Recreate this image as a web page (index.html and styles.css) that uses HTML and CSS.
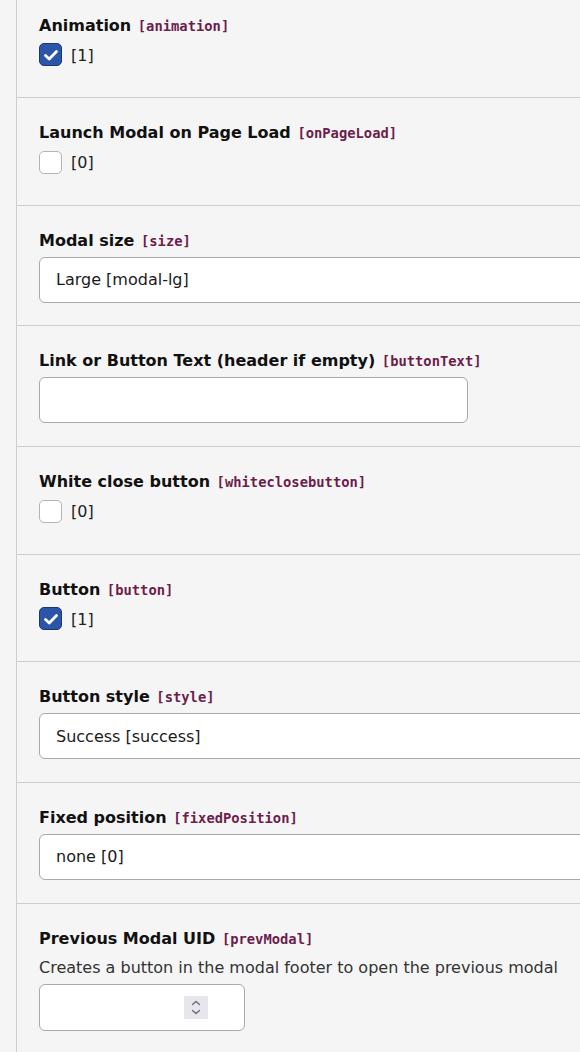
FILE: index.html
```html
<!DOCTYPE html>
<html>
<head>
<meta charset="utf-8">
<link rel="stylesheet" href="styles.css">
</head>
<body>
<div class="panel">
  <div class="field field-first">
    <div class="label">Animation <code class="key">[animation]</code></div>
    <div class="check-row">
      <span class="checkbox checked"><svg viewBox="0 0 22 22" width="22" height="22"><path d="M5.5 11.5 L9.2 15 L16.5 7.5" fill="none" stroke="#fff" stroke-width="2.8" stroke-linecap="round" stroke-linejoin="round"/></svg></span>
      <span class="check-text">[1]</span>
    </div>
  </div>
  <div class="field">
    <div class="label">Launch Modal on Page Load <code class="key">[onPageLoad]</code></div>
    <div class="check-row">
      <span class="checkbox"></span>
      <span class="check-text">[0]</span>
    </div>
  </div>
  <div class="field field-input">
    <div class="label">Modal size <code class="key">[size]</code></div>
    <div class="select">Large [modal-lg]</div>
  </div>
  <div class="field field-input">
    <div class="label">Link or Button Text (header if empty) <code class="key">[buttonText]</code></div>
    <div class="text-input"></div>
  </div>
  <div class="field">
    <div class="label">White close button <code class="key">[whiteclosebutton]</code></div>
    <div class="check-row">
      <span class="checkbox"></span>
      <span class="check-text">[0]</span>
    </div>
  </div>
  <div class="field">
    <div class="label">Button <code class="key">[button]</code></div>
    <div class="check-row">
      <span class="checkbox checked"><svg viewBox="0 0 22 22" width="22" height="22"><path d="M5.5 11.5 L9.2 15 L16.5 7.5" fill="none" stroke="#fff" stroke-width="2.8" stroke-linecap="round" stroke-linejoin="round"/></svg></span>
      <span class="check-text">[1]</span>
    </div>
  </div>
  <div class="field field-input">
    <div class="label">Button style <code class="key">[style]</code></div>
    <div class="select">Success [success]</div>
  </div>
  <div class="field field-input">
    <div class="label">Fixed position <code class="key">[fixedPosition]</code></div>
    <div class="select">none [0]</div>
  </div>
  <div class="field field-number">
    <div class="label">Previous Modal UID <code class="key">[prevModal]</code></div>
    <div class="description">Creates a button in the modal footer to open the previous modal</div>
    <div class="number-input">
      <span class="spinner"><svg viewBox="0 0 24 23" width="24" height="23"><path d="M8.5 8.5 L12 5.5 L15.5 8.5" fill="none" stroke="#6b6b75" stroke-width="1.4" stroke-linecap="round" stroke-linejoin="round"/><path d="M8.5 14.5 L12 17.5 L15.5 14.5" fill="none" stroke="#6b6b75" stroke-width="1.4" stroke-linecap="round" stroke-linejoin="round"/></svg></span>
    </div>
  </div>
</div>
</body>
</html>
```

FILE: styles.css
```css
html, body {
  margin: 0;
  padding: 0;
}
body {
  background: #f5f5f5;
  overflow: hidden;
  width: 580px;
  height: 1052px;
  font-family: "DejaVu Sans", Verdana, sans-serif;
  font-size: 16px;
  color: #1a1a1a;
}
.panel {
  margin-left: 16px;
  border-left: 1px solid #cdcdcd;
  min-height: 1052px;
}
.field {
  padding: 24px 0 31.5px 22px;
  border-bottom: 1px solid #cdcdcd;
}
.field-first {
  padding-top: 14.5px;
}
.field-input {
  padding-bottom: 22.75px;
}
.label {
  font-weight: bold;
  font-size: 16px;
  line-height: 22px;
  height: 22px;
  color: #111;
  white-space: nowrap;
  margin-bottom: 5px;
}
.key {
  font-family: "DejaVu Sans Mono", "Liberation Mono", monospace;
  font-size: 13.8px;
  font-weight: bold;
  color: #6b1d4c;
  margin-left: 1px;
}
.check-row {
  display: flex;
  align-items: center;
  gap: 9px;
  height: 22px;
  padding-top: 2px;
}
.checkbox {
  width: 23px;
  height: 23px;
  box-sizing: border-box;
  border: 1px solid #b3b3b3;
  border-radius: 5px;
  background: #fff;
  display: flex;
  align-items: center;
  justify-content: center;
  flex: none;
}
.checkbox svg {
  display: block;
  flex: none;
}
.checkbox.checked {
  background: #2b55a8;
  border-color: #1b3772;
}
.check-text {
  font-size: 16px;
  line-height: 22px;
  color: #222;
  padding-top: 2px;
}
.select {
  width: 580px;
  height: 46px;
  box-sizing: border-box;
  border: 1px solid #a9a9a9;
  border-radius: 6px;
  background: #fff;
  padding-left: 16px;
  display: flex;
  align-items: center;
  font-size: 16px;
  color: #1a1a1a;
}
.text-input {
  width: 429px;
  height: 46px;
  box-sizing: border-box;
  border: 1px solid #a9a9a9;
  border-radius: 6px;
  background: #fff;
}
.description {
  font-size: 16px;
  line-height: 22px;
  color: #333;
  padding-top: 2px;
  margin-bottom: 5px;
  white-space: nowrap;
}
.number-input {
  width: 206px;
  height: 47px;
  box-sizing: border-box;
  border: 1px solid #a9a9a9;
  border-radius: 6px;
  background: #fff;
  display: flex;
  align-items: center;
  justify-content: flex-end;
  padding-right: 36px;
}
.spinner {
  width: 24px;
  height: 23px;
  background: #e6e6ec;
  display: block;
}
.spinner svg {
  display: block;
}
```
